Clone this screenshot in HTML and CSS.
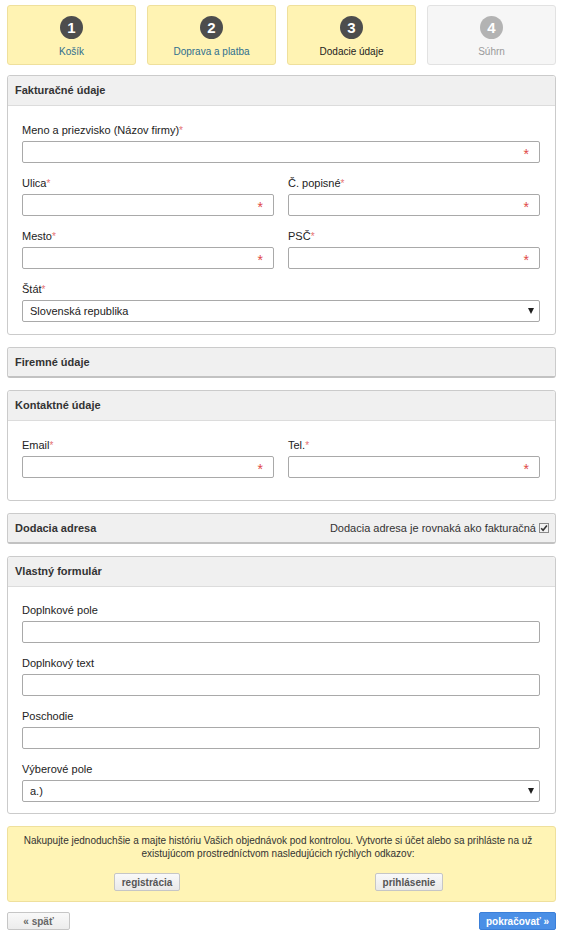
FILE: index.html
```html
<!DOCTYPE html>
<html lang="sk">
<head>
<meta charset="utf-8">
<title>Dodacie údaje</title>
<link rel="stylesheet" href="styles.css">
</head>
<body>
<div class="page">
  <ol class="steps">
    <li class="step done"><span class="num">1</span><span class="name">Košík</span></li>
    <li class="step done"><span class="num">2</span><span class="name">Doprava a platba</span></li>
    <li class="step current"><span class="num">3</span><span class="name">Dodacie údaje</span></li>
    <li class="step todo"><span class="num">4</span><span class="name">Súhrn</span></li>
  </ol>

  <section class="panel">
    <h2 class="panel-head">Fakturačné údaje</h2>
    <div class="panel-body billing">
      <div class="field">
        <label class="lbl">Meno a priezvisko (Názov firmy)<span class="req">*</span></label>
        <div class="ctrl"><input class="inp" type="text"><span class="star">*</span></div>
      </div>
      <div class="row2">
        <div class="field">
          <label class="lbl">Ulica<span class="req">*</span></label>
          <div class="ctrl"><input class="inp" type="text"><span class="star">*</span></div>
        </div>
        <div class="field">
          <label class="lbl">Č. popisné<span class="req">*</span></label>
          <div class="ctrl"><input class="inp" type="text"><span class="star">*</span></div>
        </div>
      </div>
      <div class="row2">
        <div class="field">
          <label class="lbl">Mesto<span class="req">*</span></label>
          <div class="ctrl"><input class="inp" type="text"><span class="star">*</span></div>
        </div>
        <div class="field">
          <label class="lbl">PSČ<span class="req">*</span></label>
          <div class="ctrl"><input class="inp" type="text"><span class="star">*</span></div>
        </div>
      </div>
      <div class="field">
        <label class="lbl">Štát<span class="req">*</span></label>
        <div class="selwrap"><select class="sel"><option>Slovenská republika</option></select></div>
      </div>
    </div>
  </section>

  <section class="panel collapsed">
    <h2 class="panel-head">Firemné údaje</h2>
  </section>

  <section class="panel">
    <h2 class="panel-head">Kontaktné údaje</h2>
    <div class="panel-body contact">
      <div class="row2">
        <div class="field">
          <label class="lbl">Email<span class="req">*</span></label>
          <div class="ctrl"><input class="inp" type="text"><span class="star">*</span></div>
        </div>
        <div class="field">
          <label class="lbl">Tel.<span class="req">*</span></label>
          <div class="ctrl"><input class="inp" type="text"><span class="star">*</span></div>
        </div>
      </div>
    </div>
  </section>

  <section class="panel collapsed">
    <div class="panel-head split">
      <h2 class="head-title">Dodacia adresa</h2>
      <span class="same">Dodacia adresa je rovnaká ako fakturačná
        <span class="check"><svg viewBox="0 0 10 10" width="10" height="10"><rect x="0.5" y="0.5" width="9" height="9" fill="#f2f2f2" stroke="#8a8a8a"/><path d="M2.2 5.2 L4.1 7.2 L7.9 2.6" fill="none" stroke="#333" stroke-width="1.6"/></svg></span>
      </span>
    </div>
  </section>

  <section class="panel">
    <h2 class="panel-head">Vlastný formulár</h2>
    <div class="panel-body custom">
      <div class="field">
        <label class="lbl">Doplnkové pole</label>
        <div class="ctrl"><input class="inp" type="text"></div>
      </div>
      <div class="field">
        <label class="lbl">Doplnkový text</label>
        <div class="ctrl"><input class="inp" type="text"></div>
      </div>
      <div class="field">
        <label class="lbl">Poschodie</label>
        <div class="ctrl"><input class="inp" type="text"></div>
      </div>
      <div class="field">
        <label class="lbl">Výberové pole</label>
        <div class="selwrap"><select class="sel"><option>a.)</option></select></div>
      </div>
    </div>
  </section>

  <div class="promo">
    <p class="promo-text">Nakupujte jednoduchšie a majte históriu Vašich objednávok pod kontrolou. Vytvorte si účet alebo sa prihláste na už existujúcom prostredníctvom nasledujúcich rýchlych odkazov:</p>
    <div class="promo-actions">
      <button class="btn-light" type="button">registrácia</button>
      <button class="btn-light" type="button">prihlásenie</button>
    </div>
  </div>

  <div class="nav">
    <button class="btn-back" type="button">« späť</button>
    <button class="btn-next" type="button">pokračovať »</button>
  </div>
</div>
</body>
</html>
```
FILE: styles.css
```css
* { box-sizing: border-box; }

body {
  margin: 0;
  background: #fff;
  font-family: "Liberation Sans", Arial, sans-serif;
  font-size: 11px;
  color: #333;
}

.page {
  padding: 5px 6px 0 7px;
}

/* steps */
.steps {
  display: flex;
  gap: 11px;
  list-style: none;
  margin: 0 0 10px;
  padding: 0;
}
.step {
  flex: 1;
  height: 60px;
  background: #fff3b3;
  border: 1px solid #efe09c;
  border-radius: 3px;
  display: flex;
  flex-direction: column;
  align-items: center;
  padding-top: 10px;
}
.num {
  width: 23px;
  height: 23px;
  border-radius: 50%;
  background: #4d4d4d;
  color: #fff;
  font-weight: bold;
  font-size: 15px;
  line-height: 23px;
  text-align: center;
}
.name {
  margin-top: 7px;
  font-size: 10px;
  line-height: 12px;
}
.step.done .name { color: #2f6e8e; }
.step.current .name { color: #222; }
.step.todo {
  background: #f6f6f6;
  border-color: #e2e2e2;
}
.step.todo .num { background: #b3b3b3; }
.step.todo .name { color: #9a9a9a; }

/* panels */
.panel {
  border: 1px solid #cbcbcb;
  border-radius: 3px;
  margin-bottom: 12px;
}
.panel-head {
  margin: 0;
  height: 30px;
  padding-left: 7px;
  background: #f0f0f0;
  border-bottom: 1px solid #dcdcdc;
  border-radius: 3px 3px 0 0;
  font-size: 11px;
  font-weight: bold;
  line-height: 29px;
  color: #333;
}
.panel.collapsed {
  border-bottom: 2px solid #c2c2c2;
}
.panel.collapsed .panel-head {
  height: 28px;
  line-height: 28px;
  border-bottom: 0;
  border-radius: 3px;
}
.panel-head.split {
  display: flex;
  justify-content: space-between;
  align-items: center;
  padding-right: 6px;
}
.head-title {
  margin: 0;
  font-size: 11px;
  font-weight: bold;
}
.same {
  display: flex;
  align-items: center;
  gap: 3px;
  font-weight: normal;
  color: #333;
}
.check {
  display: flex;
}

.panel-body {
  padding: 17px 15px 13px 14px;
}
.panel-body.billing { padding-bottom: 12px; }
.panel-body.contact { padding-bottom: 22px; }
.panel-body.custom { padding-top: 16px; padding-bottom: 11px; }

.field { margin-bottom: 13px; }
.panel-body > .field:last-child,
.panel-body > .row2:last-child .field { margin-bottom: 0; }

.row2 {
  display: grid;
  grid-template-columns: 1fr 1fr;
  column-gap: 14px;
}

.lbl {
  display: block;
  height: 14px;
  line-height: 14px;
  margin-bottom: 4px;
  color: #222;
}
.req {
  color: #e57373;
  font-size: 10px;
  line-height: 0;
}

.ctrl { position: relative; }
.inp {
  display: block;
  width: 100%;
  height: 22px;
  margin: 0;
  border: 1px solid #a9a9a9;
  border-radius: 2px;
  background: #fff;
  font: 11px "Liberation Sans", Arial, sans-serif;
}
.star {
  position: absolute;
  right: 11px;
  top: 6px;
  color: #e04848;
  font-size: 14px;
  line-height: 14px;
}

.selwrap { position: relative; }
.sel {
  display: block;
  width: 100%;
  height: 22px;
  margin: 0;
  padding: 0 0 0 7px;
  appearance: none;
  -webkit-appearance: none;
  border: 1px solid #a9a9a9;
  border-radius: 2px;
  background: #fff;
  color: #222;
  font: 11px "Liberation Sans", Arial, sans-serif;
}
.selwrap::after {
  content: "";
  position: absolute;
  right: 6px;
  top: 8px;
  border-left: 3.5px solid transparent;
  border-right: 3.5px solid transparent;
  border-top: 6px solid #1e1e1e;
}

/* promo */
.promo {
  background: #fff4b5;
  border: 1px solid #efe09c;
  border-radius: 3px;
  padding: 7px 15px 10px 8px;
  text-align: center;
}
.promo-text {
  margin: 0;
  font-size: 10px;
  line-height: 13px;
  color: #333;
}
.promo-actions {
  display: grid;
  grid-template-columns: 1fr 1fr;
  justify-items: center;
  margin-top: 13px;
}
.btn-light {
  height: 18px;
  padding: 0 7px;
  border: 1px solid #c6c6c6;
  border-radius: 2px;
  background: linear-gradient(#f9f9f9, #e9e9e9);
  color: #555;
  font: bold 10px "Liberation Sans", Arial, sans-serif;
}

/* nav */
.nav {
  display: flex;
  justify-content: space-between;
  margin-top: 10px;
}
.btn-back {
  width: 63px;
  height: 18px;
  padding: 0;
  border: 1px solid #c6c6c6;
  border-radius: 2px;
  background: linear-gradient(#f9f9f9, #ececec);
  color: #666;
  font: bold 10px "Liberation Sans", Arial, sans-serif;
}
.btn-next {
  width: 77px;
  height: 18px;
  padding: 0;
  border: 1px solid #3b7fd8;
  border-radius: 2px;
  background: #4a8fe6;
  color: #fff;
  font: bold 10px "Liberation Sans", Arial, sans-serif;
}
```
